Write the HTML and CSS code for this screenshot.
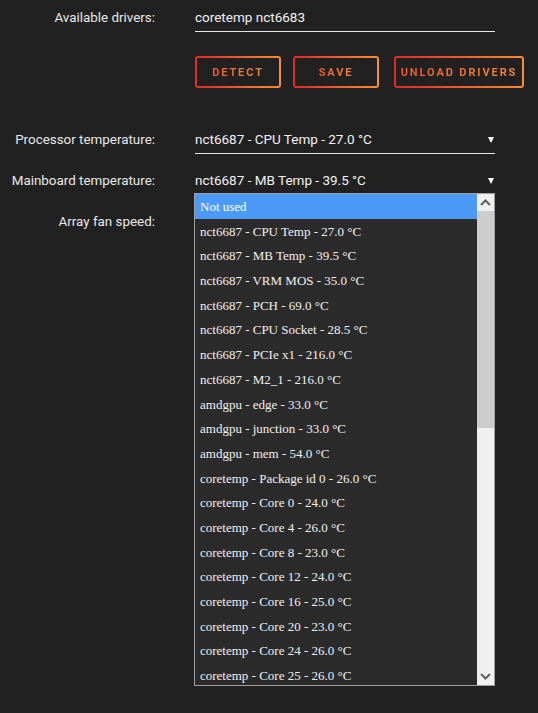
FILE: index.html
```html
<!DOCTYPE html>
<html lang="en">
<head>
    <meta charset="UTF-8">
    <meta name="viewport" content="width=device-width, initial-scale=1.0">
    <title>System Temp</title>
    <link rel="stylesheet" href="styles.css">
</head>
<body>
    <div class="settings">
        <div class="row row-input">
            <div class="label">Available drivers:</div>
            <div class="field">coretemp nct6683</div>
        </div>

        <div class="row row-buttons">
            <div class="label"></div>
            <div class="buttons">
                <button class="btn btn-detect"><span>Detect</span></button>
                <button class="btn btn-save"><span>Save</span></button>
                <button class="btn btn-unload"><span>Unload drivers</span></button>
            </div>
        </div>

        <div class="row row-select first-select">
            <div class="label">Processor temperature:</div>
            <div class="field select">nct6687 - CPU Temp - 27.0 °C<span class="caret"></span></div>
        </div>

        <div class="row row-select">
            <div class="label">Mainboard temperature:</div>
            <div class="field select open">nct6687 - MB Temp - 39.5 °C<span class="caret"></span>
                <div class="dropdown">
                    <ul class="options" id="options"></ul>
                    <div class="scrollbar">
                        <div class="sb-btn">
                            <svg width="11" height="7" viewBox="0 0 11 7"><path d="M1 6 L5.5 1.5 L10 6" fill="none" stroke="#606060" stroke-width="2"/></svg>
                        </div>
                        <div class="sb-thumb"></div>
                        <div class="sb-track"></div>
                        <div class="sb-btn">
                            <svg width="11" height="7" viewBox="0 0 11 7"><path d="M1 1 L5.5 5.5 L10 1" fill="none" stroke="#606060" stroke-width="2"/></svg>
                        </div>
                    </div>
                </div>
            </div>
        </div>

        <div class="row row-select">
            <div class="label">Array fan speed:</div>
            <div class="field select"><span class="caret"></span></div>
        </div>
    </div>

    <script>
        const sensors = [
            "Not used",
            "nct6687 - CPU Temp - 27.0 °C",
            "nct6687 - MB Temp - 39.5 °C",
            "nct6687 - VRM MOS - 35.0 °C",
            "nct6687 - PCH - 69.0 °C",
            "nct6687 - CPU Socket - 28.5 °C",
            "nct6687 - PCIe x1 - 216.0 °C",
            "nct6687 - M2_1 - 216.0 °C",
            "amdgpu - edge - 33.0 °C",
            "amdgpu - junction - 33.0 °C",
            "amdgpu - mem - 54.0 °C",
            "coretemp - Package id 0 - 26.0 °C",
            "coretemp - Core 0 - 24.0 °C",
            "coretemp - Core 4 - 26.0 °C",
            "coretemp - Core 8 - 23.0 °C",
            "coretemp - Core 12 - 24.0 °C",
            "coretemp - Core 16 - 25.0 °C",
            "coretemp - Core 20 - 23.0 °C",
            "coretemp - Core 24 - 26.0 °C",
            "coretemp - Core 25 - 26.0 °C"
        ];

        const list = document.getElementById("options");
        sensors.forEach((name, i) => {
            const li = document.createElement("li");
            li.textContent = name;
            if (i === 0) li.className = "selected";
            list.appendChild(li);
        });
    </script>
</body>
</html>
```

FILE: styles.css
```css
html, body {
    min-height: 100%;
}

body {
    margin: 0;
    min-height: 713px;
    background-color: #212121;
    color: #e8e8e8;
    font-family: Roboto, "Noto Sans", sans-serif;
    font-size: 13.4px;
}

.settings {
    padding-top: 3px;
}

.row {
    display: grid;
    grid-template-columns: 155px 300px;
    column-gap: 40px;
    align-items: center;
}

.label {
    text-align: right;
    color: #e8e8e8;
}

.field {
    position: relative;
    box-sizing: border-box;
    height: 29px;
    line-height: 28px;
    border-bottom: 1px solid #e6e6e6;
    color: #f2f2f2;
    font-size: 13.5px;
    white-space: nowrap;
}

.row-buttons {
    margin-top: 24px;
}

.buttons {
    display: flex;
    width: 340px;
}

.btn {
    height: 32px;
    padding: 0;
    border: 2px solid transparent;
    border-radius: 3px;
    background:
        linear-gradient(#212121, #212121) padding-box,
        linear-gradient(90deg, #e22828, #ff8c2f) border-box;
    font-family: Roboto, "Noto Sans", sans-serif;
    font-size: 11px;
    font-weight: bold;
    letter-spacing: 1.9px;
    text-transform: uppercase;
    white-space: nowrap;
}

.btn-detect {
    width: 86px;
    margin-right: 12px;
}

.btn-save {
    width: 86px;
    margin-right: 15px;
}

.btn-unload {
    width: 130px;
    flex-shrink: 0;
}

.btn span {
    background: linear-gradient(90deg, #ea5a2a, #f68a30);
    -webkit-background-clip: text;
    background-clip: text;
    color: transparent;
}

.first-select {
    margin-top: 37px;
}

.row-select + .row-select {
    margin-top: 12px;
}

.caret {
    position: absolute;
    right: 1px;
    top: 12px;
    width: 0;
    height: 0;
    border-left: 3px solid transparent;
    border-right: 3px solid transparent;
    border-top: 6px solid #ffffff;
}

.dropdown {
    position: absolute;
    left: -1px;
    top: 27px;
    width: 301px;
    height: 493px;
    box-sizing: border-box;
    display: flex;
    border: 1px solid #a0a0a0;
    background-color: #2b2b2b;
    z-index: 2;
}

.options {
    flex: 1;
    margin: 0;
    padding: 0;
    list-style: none;
    overflow: hidden;
}

.options li {
    box-sizing: border-box;
    height: 24.7px;
    padding-top: 1px;
    line-height: 23.7px;
    padding-left: 5px;
    font-family: "Liberation Serif", "Times New Roman", serif;
    font-size: 13px;
    color: #f0f0f0;
}

.options li.selected {
    background-color: #4b9af8;
    color: #ffffff;
}

.scrollbar {
    width: 17px;
    display: flex;
    flex-direction: column;
    background-color: #f0f0f0;
}

.sb-btn {
    height: 17px;
    display: flex;
    align-items: center;
    justify-content: center;
    background-color: #f0f0f0;
}

.sb-thumb {
    height: 217px;
    background-color: #cdcdcd;
}

.sb-track {
    flex: 1;
}
```
